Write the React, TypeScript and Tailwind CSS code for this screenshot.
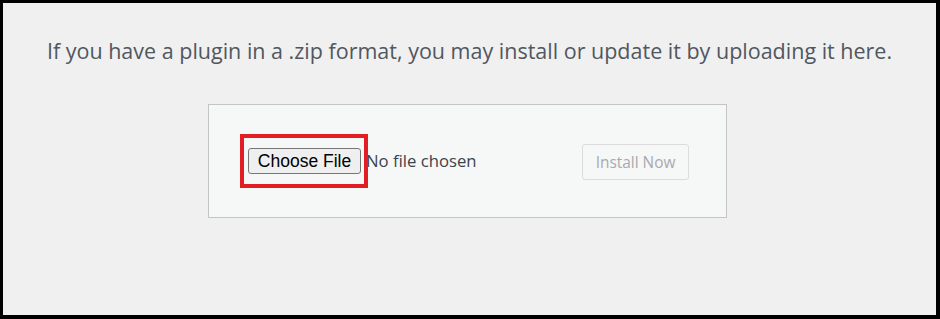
import React from "react";

export default function App() {
  return (
    <div className="w-[940px] h-[319px] box-border border-black border-t-[3px] border-l-[3px] border-r-4 border-b-4 bg-[#f0f0f1] flex flex-col items-center" style={{ fontFamily: '"Open Sans", "Noto Sans", sans-serif' }}>
      <p className="mt-[33px] text-[21.5px] leading-[30px] text-[#50575e] whitespace-nowrap">
        If you have a plugin in a .zip format, you may install or update it by uploading it here.
      </p>
      <div className="mt-[38px] ml-[-4px] w-[519px] h-[114px] box-border border border-[#c3c4c7] bg-[#f6f7f7] flex items-center pl-[39px] pr-[37px]">
        <div className="flex items-center flex-1">
          <div className="relative">
            <button
              className="h-[26px] w-[113px] box-border border border-[#767676] rounded-[3px] bg-[#efefef] text-[17.5px] text-black flex items-center justify-center"
              style={{ fontFamily: '"Liberation Sans", Arial, sans-serif' }}
            >
              Choose File
            </button>
            <div className="absolute left-[-8px] top-[-14px] w-[128px] h-[54px] border-[4px] border-[#e21d24] pointer-events-none" />
          </div>
          <span className="ml-[5px] text-[16.7px] text-[#3c434a] relative">No file chosen</span>
        </div>
        <button className="mt-[2px] h-[36px] w-[107px] box-border border border-[#dcdcde] rounded-[3px] bg-[#f6f7f7] text-[15.4px] text-[#a7aaad] flex items-center justify-center pt-[2px]">
          Install Now
        </button>
      </div>
    </div>
  );
}
